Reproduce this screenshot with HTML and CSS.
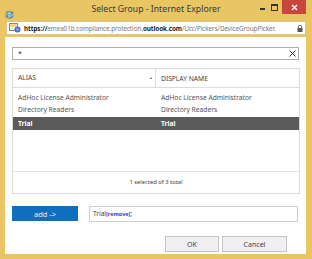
FILE: index.html
```html
<!DOCTYPE html>
<html lang="en">
  <head>
    <meta charset="UTF-8" />
    <title>Select Group - Internet Explorer</title>
    <link rel="stylesheet" href="styles.css">
  </head>
  <body>
    <div class="window">
      <div class="titlebar">
        <div class="tb-left">
          <svg class="ie-icon" width="11" height="11" viewBox="0 0 11 11">
            <circle cx="5.5" cy="5.8" r="4" fill="#3d8fd6" />
            <circle cx="5.5" cy="5.8" r="2" fill="#bfe0f7" />
            <rect x="3" y="5.4" width="5" height="1" fill="#3d8fd6" />
            <ellipse cx="5.5" cy="5.5" rx="5.2" ry="2.2" fill="none" stroke="#e8b830" stroke-width="1" transform="rotate(-35 5.5 5.5)" />
          </svg>
        </div>
        <div class="tb-title">Select Group - Internet Explorer</div>
        <div class="tb-right">
          <span class="ctl-min"></span>
          <span class="ctl-max"></span>
          <span class="ctl-close">
            <svg width="7" height="7" viewBox="0 0 7 7">
              <path d="M1 1 L6 6 M6 1 L1 6" stroke="#fff" stroke-width="1.4" />
            </svg>
          </span>
        </div>
      </div>

      <div class="addressbar">
        <svg class="page-icon" width="12" height="10" viewBox="0 0 12 10">
          <rect x="0.5" y="0.5" width="8" height="7" fill="#f4f4f4" stroke="#8a8a8a" />
          <rect x="1.5" y="1.5" width="6" height="2" fill="#f2c84b" />
          <circle cx="8.5" cy="6.5" r="3" fill="#4a6ec8" />
          <circle cx="8.5" cy="6.5" r="1.2" fill="#9fb6ea" />
        </svg>
        <span class="url"><b class="dark">https://</b>emea01b.compliance.protection.<b class="dark">outlook.com</b>/Ucc/Pickers/DeviceGroupPicker.</span>
        <svg class="lock" width="6" height="7" viewBox="0 0 6 7">
          <path d="M1.3 3 V2 a1.7 1.7 0 0 1 3.4 0 V3" fill="none" stroke="#555" stroke-width="0.9" />
          <rect x="0.5" y="3" width="5" height="4" fill="#555" />
        </svg>
      </div>

      <div class="content">
        <div class="search">
          <span class="search-text">*</span>
          <svg class="clear" width="7" height="7" viewBox="0 0 7 7">
            <path d="M0.5 0.5 L6.5 6.5 M6.5 0.5 L0.5 6.5" stroke="#333" stroke-width="1" />
          </svg>
        </div>

        <div class="grid">
          <div class="grid-head">
            <div class="col col-alias">ALIAS <span class="sort">&#9650;</span></div>
            <div class="col col-name">DISPLAY NAME</div>
          </div>
          <div class="grid-body">
            <div class="row">
              <div class="col col-alias">AdHoc License Administrator</div>
              <div class="col col-name">AdHoc License Administrator</div>
            </div>
            <div class="row">
              <div class="col col-alias">Directory Readers</div>
              <div class="col col-name">Directory Readers</div>
            </div>
            <div class="row selected">
              <div class="col col-alias">Trial</div>
              <div class="col col-name">Trial</div>
            </div>
          </div>
          <div class="grid-foot">1 selected of 3 total</div>
        </div>

        <div class="add-row">
          <button type="button" class="btn-add">add -&gt;</button>
          <div class="picked">Trial<span class="remove">[remove]</span>;</div>
        </div>

        <div class="actions">
          <button type="button" class="btn">OK</button>
          <button type="button" class="btn btn-cancel">Cancel</button>
        </div>
      </div>
    </div>
  </body>
</html>
```

FILE: styles.css
```css
body {
  margin: 0;
  font-family: "Noto Sans", "Open Sans", sans-serif;
  color: #333;
}
.window {
  width: 312px;
  height: 259px;
  background: #e9c563;
  overflow: hidden;
}
.titlebar {
  height: 20px;
  display: grid;
  grid-template-columns: 1fr auto 1fr;
}
.tb-left {
  padding: 3px 0 0 4px;
}
.tb-title {
  font-size: 8.7px;
  line-height: 18px;
  color: #3a3a3a;
}
.tb-right {
  display: flex;
  justify-content: flex-end;
  align-items: flex-start;
  padding-right: 6px;
}
.ctl-min {
  width: 5px;
  height: 2px;
  background: #333;
  margin: 8px 6px 0 0;
}
.ctl-max {
  width: 5px;
  height: 4px;
  border: 1px solid #333;
  border-top-width: 2px;
  margin: 4px 4px 0 0;
}
.ctl-close {
  width: 24px;
  height: 14px;
  background: #c9463d;
  display: flex;
  align-items: center;
  justify-content: center;
}
.addressbar {
  margin: 1px 6px 0 6px;
  height: 12px;
  background: #fff;
  border: 1px solid #d8c68e;
  display: flex;
  align-items: center;
  padding: 0 2px;
  gap: 3px;
}
.url {
  flex: 1;
  font-size: 6.3px;
  letter-spacing: -0.05px;
  color: #777;
  white-space: nowrap;
  overflow: hidden;
}
.url .dark {
  color: #222;
}
.lock {
  flex: none;
}
.content {
  margin: 2px 6px 0 5px;
  height: 217px;
  background: #fff;
  padding: 10px 7px 0 7px;
  box-sizing: border-box;
}
.search {
  height: 11px;
  border: 1px solid #abadb3;
  display: flex;
  align-items: center;
  justify-content: space-between;
  padding: 0 2px 0 5px;
  font-size: 7px;
}
.grid {
  margin-top: 8px;
  border: 1px solid #dcdcdc;
  width: 286px;
  font-size: 6.7px;
  color: #555;
}
.grid-head {
  display: flex;
  height: 18px;
  border-bottom: 1px solid #dcdcdc;
  align-items: center;
  color: #444;
}
.grid-head .col-alias {
  border-right: 1px solid #dcdcdc;
  height: 18px;
  line-height: 18px;
  display: flex;
  justify-content: space-between;
  padding-right: 2px;
}
.sort {
  font-size: 4px;
  color: #777;
}
.col {
  box-sizing: border-box;
  padding-left: 5px;
}
.col-alias {
  width: 143px;
}
.col-name {
  flex: 1;
}
.grid-body {
  height: 79px;
  padding-top: 4px;
}
.row {
  display: flex;
  height: 12px;
  line-height: 12px;
}
.row.selected {
  height: 13px;
  line-height: 13px;
  margin-top: 1px;
  background: #5a5a5a;
  color: #fff;
  font-weight: bold;
}
.grid-foot {
  border-top: 1px solid #e4e4e4;
  height: 21px;
  line-height: 21px;
  text-align: center;
  font-size: 5.8px;
  color: #444;
}
.add-row {
  display: flex;
  gap: 11px;
  margin-top: 12px;
}
.btn-add {
  width: 66px;
  height: 15px;
  background: #106ebe;
  color: #e8f0fa;
  border: none;
  padding: 0;
  font-family: inherit;
  font-size: 7.5px;
}
.picked {
  width: 209px;
  height: 16px;
  box-sizing: border-box;
  border: 1px solid #cfcfcf;
  font-size: 6.5px;
  line-height: 14px;
  padding-left: 3px;
  color: #444;
}
.remove {
  color: #3a3acc;
  font-weight: bold;
  font-size: 5.5px;
}
.actions {
  display: flex;
  justify-content: flex-end;
  gap: 3px;
  margin-top: 14px;
  padding-right: 12px;
}
.btn {
  width: 54px;
  height: 16px;
  background: #f0f0f0;
  border: 1px solid #c4c4c4;
  font-family: inherit;
  font-size: 7px;
  color: #444;
  padding: 0;
}
.btn-cancel {
  width: 65px;
}
```
